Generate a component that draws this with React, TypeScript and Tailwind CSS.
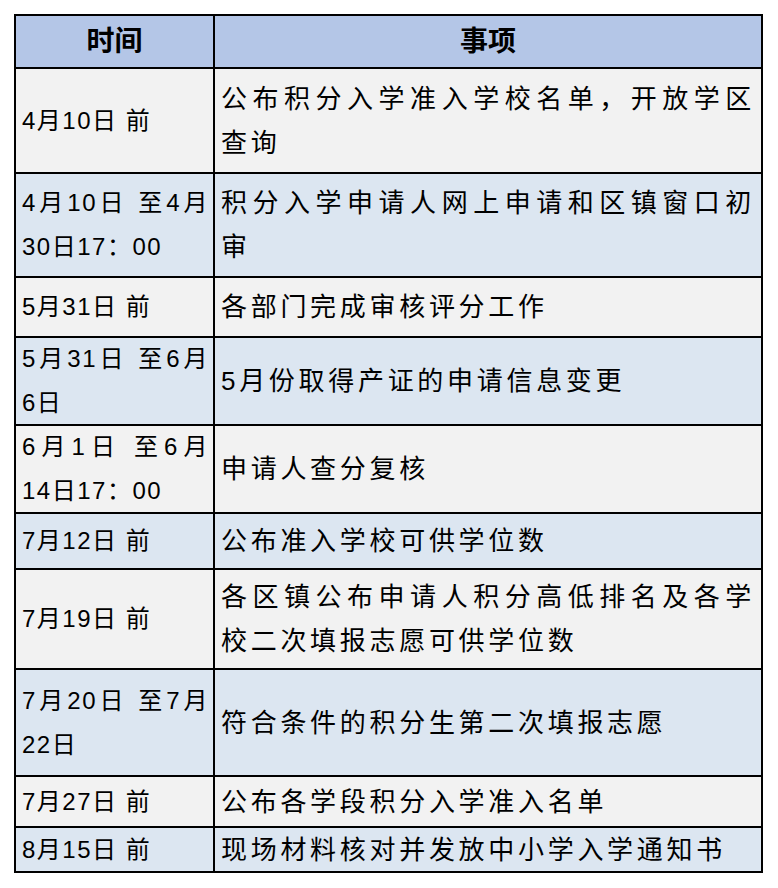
import React from "react";

type Row = {
  h: number;
  time: string[];
  item: string[];
  blue: boolean;
};

const rows: Row[] = [
  { h: 105, time: ["4月10日 前"], item: ["公布积分入学准入学校名单，开放学区", "查询"], blue: false },
  { h: 104, time: ["4月10日 至4月", "30日17：00"], item: ["积分入学申请人网上申请和区镇窗口初", "审"], blue: true },
  { h: 60, time: ["5月31日 前"], item: ["各部门完成审核评分工作"], blue: false },
  { h: 88, time: ["5月31日 至6月", "6日"], item: ["5月份取得产证的申请信息变更"], blue: true },
  { h: 88, time: ["6月1日 至6月", "14日17：00"], item: ["申请人查分复核"], blue: false },
  { h: 56, time: ["7月12日 前"], item: ["公布准入学校可供学位数"], blue: true },
  { h: 100, time: ["7月19日 前"], item: ["各区镇公布申请人积分高低排名及各学", "校二次填报志愿可供学位数"], blue: false },
  { h: 107, time: ["7月20日 至7月", "22日"], item: ["符合条件的积分生第二次填报志愿"], blue: true },
  { h: 51, time: ["7月27日 前"], item: ["公布各学段积分入学准入名单"], blue: false },
  { h: 43, time: ["8月15日 前"], item: ["现场材料核对并发放中小学入学通知书"], blue: true },
];

const font = "font-['Liberation_Sans','Noto_Sans_CJK_SC',sans-serif]";

function Lines({ lines, size }: { lines: string[]; size: "time" | "item" }) {
  const base =
    size === "time"
      ? "text-[24px] tracking-[1.5px] leading-[44px]"
      : "text-[26px] tracking-[3.7px] leading-[44px]";
  return (
    <div className="w-full">
      {lines.map((line, i) => (
        <div
          key={i}
          className={`${base} whitespace-nowrap ${
            lines.length > 1 && i === 0 ? "text-justify [text-align-last:justify]" : ""
          }`}
        >
          {line}
        </div>
      ))}
    </div>
  );
}

export default function App() {
  return (
    <div className={`min-h-[888px] w-[778px] bg-white pt-[14px] pl-[14px] ${font} text-black`}>
      <div className="w-[749px] border-2 border-black flex flex-col">
        {/* header */}
        <div className="flex h-[53px] border-b-2 border-black bg-[#b4c6e7]">
          <div className="w-[199px] border-r-2 border-black flex items-center justify-center text-[28px] font-bold">
            时间
          </div>
          <div className="flex-1 flex items-center justify-center text-[28px] font-bold">事项</div>
        </div>

        {rows.map((r, i) => (
          <div
            key={i}
            style={{ height: r.h }}
            className={`flex ${i < rows.length - 1 ? "border-b-2 border-black" : ""} ${
              r.blue ? "bg-[#dce6f1]" : "bg-[#f2f2f2]"
            }`}
          >
            <div className="w-[199px] border-r-2 border-black flex items-center pl-[6px] pr-[4px]">
              <Lines lines={r.time} size="time" />
            </div>
            <div className="flex-1 flex items-center pl-[6px] pr-[6px]">
              <Lines lines={r.item} size="item" />
            </div>
          </div>
        ))}
      </div>
    </div>
  );
}
